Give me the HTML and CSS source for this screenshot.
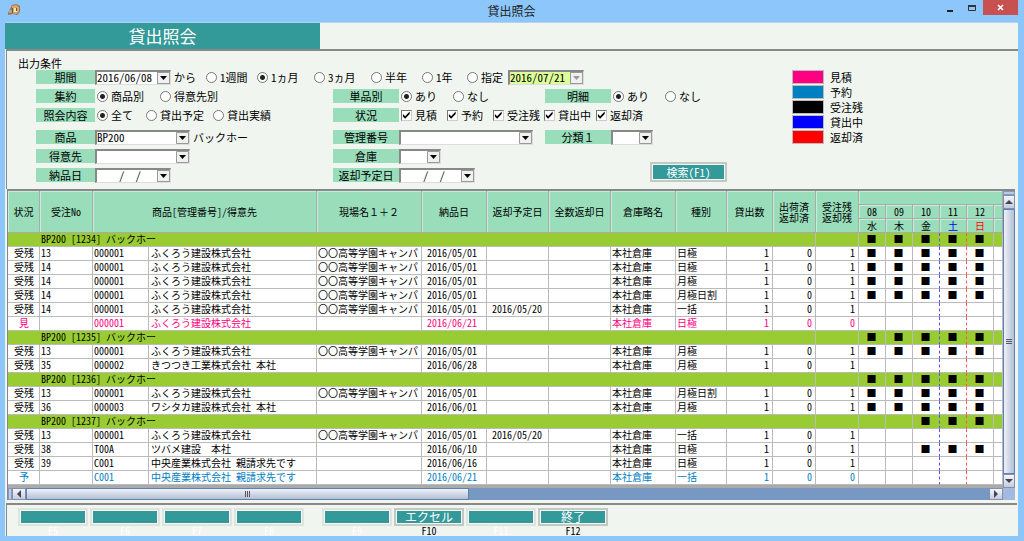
FILE: index.html
```html
<!DOCTYPE html>
<html lang="ja">
<head>
<meta charset="utf-8">
<title>貸出照会</title>
<link rel="stylesheet" href="styles.css">
</head>
<body>
<div class="window">
  <header class="titlebar">
    <svg class="app-icon" viewBox="0 0 12 12" aria-hidden="true">
      <path d="M0 9 2 5l2-4 4-1 4 2v6l-3 3-4-1-5 1z" fill="#9a7658"/>
      <path d="M4 2 8 1l3 2v5l-3 2-4-1z" fill="#dba468"/>
      <path d="M6 4h3v4H6z" fill="#efe3b0"/>
      <path d="M1 6h3v3H1z" fill="#b9a878"/>
      <path d="M4 4h1v5H4zM8 4h1v3H8z" fill="#5d5a58"/>
    </svg>
    <h1 class="window-title">貸出照会</h1>
    <div class="window-buttons">
      <button class="win-btn" aria-label="最小化"><svg viewBox="0 0 10 10"><path d="M2 7h6v2H2z" fill="#222"/></svg></button>
      <button class="win-btn" aria-label="最大化"><svg viewBox="0 0 10 10"><path d="M1.500 2.500h7v5h-7z" fill="none" stroke="#333"/><path d="M1 2h8v2H1z" fill="#333"/></svg></button>
      <button class="win-btn close" aria-label="閉じる"><svg viewBox="0 0 10 10"><path d="m2 2 5 5M7 2 2 7" stroke="#fff" stroke-width="1.6"/></svg></button>
    </div>
  </header>
  <main class="content">
    <div class="banner"><h2 class="banner-title">貸出照会</h2></div>

    <form class="criteria">
      <div class="criteria-title">出力条件</div>
      <div class="criteria-body">
        <div class="fields">
          <div class="field wide">
            <label class="tag" for="from">期間</label>
            <span class="date"><input id="from" type="text" value="2016/06/08"><button type="button" class="drop" aria-label="日付を選択"></button></span>
            <span class="after">から</span>
            <div class="opts opts-period">
              <label><input type="radio" name="period">1週間</label>
              <label><input type="radio" name="period" checked>1ヵ月</label>
              <label><input type="radio" name="period">3ヵ月</label>
              <label><input type="radio" name="period">半年</label>
              <label><input type="radio" name="period">1年</label>
              <label><input type="radio" name="period">指定</label>
            </div>
            <span class="date until"><input type="text" value="2016/07/21" aria-label="指定日"><button type="button" class="drop" aria-label="日付を選択" disabled></button></span>
          </div>

          <div class="field" role="radiogroup" aria-labelledby="t-sum">
            <span class="tag" id="t-sum">集約</span>
            <div class="opts opts-sum">
              <label><input type="radio" name="sum" checked>商品別</label>
              <label><input type="radio" name="sum">得意先別</label>
            </div>
          </div>
          <div class="field" role="radiogroup" aria-labelledby="t-unit">
            <span class="tag" id="t-unit">単品別</span>
            <div class="opts opts-yn">
              <label><input type="radio" name="unit" checked>あり</label>
              <label><input type="radio" name="unit">なし</label>
            </div>
          </div>
          <div class="field" role="radiogroup" aria-labelledby="t-detail">
            <span class="tag" id="t-detail">明細</span>
            <div class="opts opts-yn">
              <label><input type="radio" name="detail" checked>あり</label>
              <label><input type="radio" name="detail">なし</label>
            </div>
          </div>

          <div class="field" role="radiogroup" aria-labelledby="t-kind">
            <span class="tag" id="t-kind">照会内容</span>
            <div class="opts opts-kind">
              <label><input type="radio" name="kind" checked>全て</label>
              <label><input type="radio" name="kind">貸出予定</label>
              <label><input type="radio" name="kind">貸出実績</label>
            </div>
          </div>
          <div class="field span2" role="group" aria-labelledby="t-state">
            <span class="tag" id="t-state">状況</span>
            <div class="opts opts-state">
              <label><input type="checkbox" checked>見積</label>
              <label><input type="checkbox" checked>予約</label>
              <label><input type="checkbox" checked>受注残</label>
              <label><input type="checkbox" checked>貸出中</label>
              <label><input type="checkbox" checked>返却済</label>
            </div>
          </div>

          <div class="field">
            <label class="tag" for="item">商品</label>
            <select id="item" class="combo"><option>BP200</option></select>
            <span class="after">バックホー</span>
          </div>
          <div class="field">
            <label class="tag" for="serial">管理番号</label>
            <select id="serial" class="combo combo-long"><option></option></select>
          </div>
          <div class="field">
            <label class="tag" for="class1">分類１</label>
            <select id="class1" class="combo combo-short"><option></option></select>
          </div>

          <div class="field">
            <label class="tag" for="client">得意先</label>
            <select id="client" class="combo"><option></option></select>
          </div>
          <div class="field">
            <label class="tag" for="store">倉庫</label>
            <select id="store" class="combo combo-short"><option></option></select>
          </div>
          <button type="button" class="btn search">検索(F1)</button>

          <div class="field">
            <label class="tag" for="deliv">納品日</label>
            <span class="date"><input id="deliv" type="text" value="    /  /"><button type="button" class="drop" aria-label="日付を選択"></button></span>
          </div>
          <div class="field">
            <label class="tag" for="due">返却予定日</label>
            <span class="date"><input id="due" type="text" value="    /  /"><button type="button" class="drop" aria-label="日付を選択"></button></span>
          </div>
        </div>
        <ul class="legend">
          <li><span class="swatch estimate"></span>見積</li>
          <li><span class="swatch reserve"></span>予約</li>
          <li><span class="swatch ordered"></span>受注残</li>
          <li><span class="swatch lent"></span>貸出中</li>
          <li><span class="swatch returned"></span>返却済</li>
        </ul>
      </div>
    </form>

    <section class="results">
      <div class="grid-view">
        <table class="list">
          <colgroup>
            <col class="c-state"><col class="c-order"><col class="c-code"><col class="c-name"><col class="c-site"><col class="c-date"><col class="c-due"><col class="c-due"><col class="c-store"><col class="c-kind"><col class="c-qty"><col class="c-num"><col class="c-num"><col class="c-day"><col class="c-day"><col class="c-day"><col class="c-day"><col class="c-day"><col class="c-rest">
          </colgroup>
          <thead>
            <tr><th rowspan="3">状況</th><th rowspan="3">受注No</th><th rowspan="3" colspan="2">商品[管理番号]/得意先</th><th rowspan="3">現場名１＋２</th><th rowspan="3">納品日</th><th rowspan="3">返却予定日</th><th rowspan="3">全数返却日</th><th rowspan="3">倉庫略名</th><th rowspan="3">種別</th><th rowspan="3">貸出数</th><th rowspan="3" class="two">出荷済<br>返却済</th><th rowspan="3" class="two">受注残<br>返却残</th><th colspan="6"></th></tr>
            <tr><th>08</th><th>09</th><th>10</th><th>11</th><th>12</th><th></th></tr>
            <tr><th>水</th><th>木</th><th>金</th><th class="sat">土</th><th class="sun">日</th><th></th></tr>
          </thead>
          <tbody>
            <tr class="group"><td><td colspan="11">BP200 [1234] バックホー<td><td>■<td>■<td>■<td>■<td>■<td></tr>
            <tr><td>受残<td>13<td>000001<td>ふくろう建設株式会社<td>〇〇高等学園キャンパ<td>2016/05/01<td><td><td>本社倉庫<td>日極<td>1<td>0<td>1<td>■<td>■<td>■<td>■<td>■<td></tr>
            <tr><td>受残<td>14<td>000001<td>ふくろう建設株式会社<td>〇〇高等学園キャンパ<td>2016/05/01<td><td><td>本社倉庫<td>日極<td>1<td>0<td>1<td>■<td>■<td>■<td>■<td>■<td></tr>
            <tr><td>受残<td>14<td>000001<td>ふくろう建設株式会社<td>〇〇高等学園キャンパ<td>2016/05/01<td><td><td>本社倉庫<td>月極<td>1<td>0<td>1<td>■<td>■<td>■<td>■<td>■<td></tr>
            <tr><td>受残<td>14<td>000001<td>ふくろう建設株式会社<td>〇〇高等学園キャンパ<td>2016/05/01<td><td><td>本社倉庫<td>月極日割<td>1<td>0<td>1<td>■<td>■<td>■<td>■<td>■<td></tr>
            <tr><td>受残<td>14<td>000001<td>ふくろう建設株式会社<td>〇〇高等学園キャンパ<td>2016/05/01<td>2016/05/20<td><td>本社倉庫<td>一括<td>1<td>0<td>1<td><td><td><td><td><td></tr>
            <tr class="is-estimate"><td>見<td><td>000001<td>ふくろう建設株式会社<td><td>2016/06/21<td><td><td>本社倉庫<td>日極<td>1<td>0<td>0<td><td><td><td><td><td></tr>
            <tr class="group"><td><td colspan="11">BP200 [1235] バックホー<td><td>■<td>■<td>■<td>■<td>■<td></tr>
            <tr><td>受残<td>13<td>000001<td>ふくろう建設株式会社<td>〇〇高等学園キャンパ<td>2016/05/01<td><td><td>本社倉庫<td>月極<td>1<td>0<td>1<td>■<td>■<td>■<td>■<td>■<td></tr>
            <tr><td>受残<td>35<td>000002<td>きつつき工業株式会社 本社<td><td>2016/06/28<td><td><td>本社倉庫<td>月極<td>1<td>0<td>1<td><td><td><td><td><td></tr>
            <tr class="group"><td><td colspan="11">BP200 [1236] バックホー<td><td>■<td>■<td>■<td>■<td>■<td></tr>
            <tr><td>受残<td>13<td>000001<td>ふくろう建設株式会社<td>〇〇高等学園キャンパ<td>2016/05/01<td><td><td>本社倉庫<td>月極日割<td>1<td>0<td>1<td>■<td>■<td>■<td>■<td>■<td></tr>
            <tr><td>受残<td>36<td>000003<td>ワシタカ建設株式会社 本社<td><td>2016/06/01<td><td><td>本社倉庫<td>月極<td>1<td>0<td>1<td>■<td>■<td>■<td>■<td>■<td></tr>
            <tr class="group"><td><td colspan="11">BP200 [1237] バックホー<td><td><td><td>■<td>■<td>■<td></tr>
            <tr><td>受残<td>13<td>000001<td>ふくろう建設株式会社<td>〇〇高等学園キャンパ<td>2016/05/01<td>2016/05/20<td><td>本社倉庫<td>一括<td>1<td>0<td>1<td><td><td><td><td><td></tr>
            <tr><td>受残<td>38<td>T00A<td>ツバメ建設　本社<td><td>2016/06/10<td><td><td>本社倉庫<td>日極<td>1<td>0<td>1<td><td><td>■<td>■<td>■<td></tr>
            <tr><td>受残<td>39<td>C001<td>中央産業株式会社 親請求先です<td><td>2016/06/16<td><td><td>本社倉庫<td>日極<td>1<td>0<td>1<td><td><td><td><td><td></tr>
            <tr class="is-reserve"><td>予<td><td>C001<td>中央産業株式会社 親請求先です<td><td>2016/06/21<td><td><td>本社倉庫<td>一括<td>1<td>0<td>0<td><td><td><td><td><td></tr>
          </tbody>
        </table>
        <div class="vscroll">
          <span class="nib"></span>
          <button class="arrow" aria-label="上へ"><svg viewBox="0 0 8 8"><path d="M0 6h8L4 2z"/></svg></button>
          <span class="thumb"><i></i><i></i><i></i></span>
          <button class="arrow" aria-label="下へ"><svg viewBox="0 0 8 8"><path d="M0 2h8L4 6z"/></svg></button>
        </div>
      </div>
      <div class="hscroll">
        <span class="nib"></span>
        <button class="arrow" aria-label="左へ"><svg viewBox="0 0 8 8"><path d="M6 0v8L2 4z"/></svg></button>
        <span class="thumb"><i></i><i></i><i></i></span>
        <span class="track"></span>
        <button class="arrow" aria-label="右へ"><svg viewBox="0 0 8 8"><path d="M2 0v8l4-4z"/></svg></button>
        <span class="corner"></span>
      </div>
    </section>

    <footer class="keys">
      <div class="key off"><button class="btn" disabled aria-label="F5"></button><span>F5</span></div>
      <div class="key off"><button class="btn" disabled aria-label="F6"></button><span>F6</span></div>
      <div class="key off"><button class="btn" disabled aria-label="F7"></button><span>F7</span></div>
      <div class="key off"><button class="btn" disabled aria-label="F8"></button><span>F8</span></div>
      <div class="key off second"><button class="btn" disabled aria-label="F9"></button><span>F9</span></div>
      <div class="key"><button class="btn">エクセル</button><span>F10</span></div>
      <div class="key off"><button class="btn" disabled aria-label="F11"></button><span>F11</span></div>
      <div class="key"><button class="btn">終了</button><span>F12</span></div>
    </footer>
  </main>
</div>
</body>
</html>
```
FILE: styles.css
```css
* { box-sizing: border-box; }

body {
  margin: 0;
  background: #8cc6fb;
  color: #000;
  font: 11px/14px "Noto Sans Mono CJK JP", "Noto Sans CJK JP", monospace;
}

button, input, select { font: inherit; color: inherit; margin: 0; padding: 0; border-radius: 0; }
h1, h2 { margin: 0; font-weight: normal; }

.window {
  display: flex;
  flex-direction: column;
  min-height: 100vh;
  padding: 0 6px 5px 5px;
}

/* title bar */
.titlebar { display: grid; grid-template-columns: 1fr auto 1fr; height: 22px; }
.app-icon { width: 12px; height: 12px; margin: 4px 0 0 3px; }
.window-title { font-size: 12px; line-height: 22px; color: #222; }
.window-buttons { display: flex; justify-content: flex-end; }
.win-btn { width: 22px; height: 15px; border: 0; background: none; display: flex; align-items: center; justify-content: center; }
.win-btn svg { width: 10px; height: 10px; }
.win-btn.close { width: 35px; background: #c75050; }

.content { flex: 1; display: flex; flex-direction: column; background: #f0f5f0; border-top: 1px solid #b4d4ec; }

.banner-title {
  width: 315px;
  background: #339999;
  color: #fff;
  font-size: 17px;
  font-weight: 300;
  line-height: 26px;
  text-align: center;
}

/* search criteria */
.criteria { border: solid #888; border-width: 2px 0 0 1px; padding: 5px 0 7px 11px; margin-left: 1px; }
.criteria-title { line-height: 14px; }
.criteria-body { display: flex; gap: 65px; padding-left: 18px; }
.fields {
  display: grid;
  grid-template-columns: 297px 212px 182px;
  grid-template-rows: 14px 14px 17px 14px 14px 14px;
  row-gap: 5px;
}
.field { display: flex; align-items: flex-start; height: 14px; white-space: nowrap; }
.wide { grid-column: 1 / -1; }
.span2 { grid-column: span 2; }
.tag { width: 66px; height: 14px; background: #99ddbb; text-align: center; }
.field:nth-child(1) .tag, .field:nth-child(2) .tag, .field:nth-child(5) .tag,
.field:nth-child(7) .tag, .field:nth-child(10) .tag, .field:nth-child(13) .tag { width: 59px; }
.after { margin-left: 3px; }

.opts { display: grid; padding-left: 2px; }
.opts label { display: flex; align-items: center; gap: 3px; height: 14px; }
.opts-period { grid-template-columns: 51px 57px 57px 51px 45px 41px; padding-left: 10px; }
.opts-sum { grid-template-columns: 63px 70px; }
.opts-yn { grid-template-columns: 52px 50px; }
.opts-kind { grid-template-columns: 49px 67px 67px; }
.opts-state { grid-template-columns: 46px 46px 51px 52px 50px; }

input[type="radio"], input[type="checkbox"] {
  appearance: none;
  flex: none;
  width: 11px;
  height: 11px;
  background: #fff;
  border: 1px solid #777;
}
input[type="radio"] { border-radius: 50%; }
input[type="radio"]:checked { background: radial-gradient(circle, #222 0 2px, #fff 3px); }
input[type="checkbox"] { border-color: #777 #ccc #ccc #777; }
input[type="checkbox"]::before {
  content: "";
  display: block;
  height: 9px;
  background: #000;
  clip-path: polygon(10% 40%, 35% 65%, 85% 12%, 85% 38%, 35% 92%, 10% 66%);
}

.date, .combo {
  height: 15px;
  background: #fff;
  border: solid;
  border-width: 2px 1px 1px 2px;
  border-color: #888 #ddd #ddd #888;
}
.date { display: flex; width: 76px; }
.date input { flex: 1; min-width: 0; height: 12px; border: 0; padding-bottom: 3px; background: none; line-height: 9px; }
.drop {
  width: 13px;
  border: 1px solid #999;
  background: #f0f0f0 url("data:image/svg+xml,%3Csvg xmlns='http://www.w3.org/2000/svg' width='7' height='4'%3E%3Cpath d='M0 0h7L3.500 4z'/%3E%3C/svg%3E") center / 7px 4px no-repeat;
}
.until { background: #ddff99; }
.drop:disabled { background-image: url("data:image/svg+xml,%3Csvg xmlns='http://www.w3.org/2000/svg' width='7' height='4'%3E%3Cpath d='M0 0h7L3.500 4z' fill='%23999'/%3E%3C/svg%3E"); }
.combo {
  appearance: none;
  width: 95px;
  line-height: 9px;
  padding-bottom: 1px;
  background: url("data:image/svg+xml,%3Csvg xmlns='http://www.w3.org/2000/svg' width='13' height='12'%3E%3Cpath d='M.5.5h12v11H.5z' fill='%23f0f0f0' stroke='%23999'/%3E%3Cpath d='M3 4h7L6.500 8z'/%3E%3C/svg%3E") right top / 13px 12px no-repeat #fff;
}
.combo-long { width: 134px; }
.combo-short { width: 42px; }

.btn {
  background: #339999;
  color: #fff;
  border: 2px solid #c4c8c4;
  outline: 1px solid #f6f8f6;
  outline-offset: -3px;
  text-align: center;
}
.search { grid-row: 5 / 7; grid-column: 3; justify-self: end; align-self: end; width: 77px; height: 20px; line-height: 14px; }

.legend { list-style: none; margin: 0; padding: 0; }
.legend li { display: flex; gap: 6px; height: 15px; }
.swatch { width: 32px; height: 14px; border: 1px solid #bbb; }
.estimate { background: #ff0080; }
.reserve { background: #0080c0; }
.ordered { background: #000; }
.lent { background: #00f; }
.returned { background: #f00; }

/* result list */
.results { margin-left: 2px; margin-right: 3px; border: solid #888; border-width: 2px 0 0 1px; background: #aaa; }
.grid-view { display: flex; font-size: 10px; line-height: 13px; }
.list { flex: 1; min-width: 0; table-layout: fixed; border-spacing: 0; width: 100%; }
.list th, .list td {
  height: 14px;
  padding: 0 0 0 1px;
  border: solid #bbb;
  border-width: 0 1px 1px 0;
  white-space: nowrap;
}
.list th { padding: 0; background: #99ddbb; font-weight: normal; border-color: #aaa; box-shadow: inset 1px 1px #c4eeda; }
.list .two { line-height: 11px; }
.list .sat { color: #00f; }
.list .sun { color: #f00; }
.list td { background: #fff; line-height: 11px; padding-bottom: 2px; }
.c-state { width: 32px; }
.c-order { width: 53px; }
.c-code { width: 56px; }
.c-site { width: 105px; }
.c-date { width: 65px; }
.c-due { width: 62px; }
.c-store { width: 65px; }
.c-kind { width: 51px; }
.c-qty { width: 46px; }
.c-num { width: 43px; }
.c-day { width: 27px; }
.c-rest { width: 9px; }
.list td:first-child { text-align: center; }
.list tr:not(.group) td:nth-child(4) { padding-left: 2px; }
.list td:nth-child(6), .list td:nth-child(7) { padding-left: 5px; }
.list tr:not(.group) td:nth-child(n+11):nth-child(-n+13) { text-align: right; padding-right: 3px; }
.list tr td:nth-last-child(-n+6) { padding: 0 1px 2px 0; text-align: center; }
.list td:nth-last-child(4) { border-right: 1px dashed #55f; }
.list td:nth-last-child(3) { border-right: 1px dashed #f55; }
.list .group td { background: #99cc33; }
.list .group td:first-child { border-right-color: #99cc33; }
.is-estimate { color: #ff0080; }
.is-reserve { color: #0080c0; }

/* scroll bars */
.vscroll { display: flex; flex-direction: column; width: 12px; margin-bottom: -3px; }
.hscroll { display: flex; height: 12px; margin-top: 3px; }
.nib { flex: none; width: 4px; background: #b8cce8; border: 1px solid #8898b8; }
.vscroll .nib { width: auto; height: 4px; }
.arrow { flex: none; width: 14px; height: 12px; border: 1px solid #8090b0; background: linear-gradient(#f4f6fa, #c4ccdc); display: flex; align-items: center; justify-content: center; }
.vscroll .arrow { width: 12px; height: 14px; }
.arrow svg { width: 8px; height: 8px; flex: none; fill: #445; }
.thumb { display: flex; align-items: center; justify-content: center; gap: 1px; border: 1px solid #6080b0; background: linear-gradient(#eef1f8, #b4bfd4); }
.vscroll .thumb { flex: 1; flex-direction: column; background: linear-gradient(90deg, #eef1f8, #b4bfd4); }
.hscroll .thumb { flex: 442; }
.thumb i { width: 1px; height: 6px; background: #556; }
.vscroll .thumb i { width: 6px; height: 1px; }
.track { flex: 522; background: #7898c4; }
.corner { width: 12px; background: #a4b8e0; }

/* function keys */
.keys { display: flex; flex: 1; gap: 2px; margin: 3px 1px 0; padding: 3px 0 0 11px; border: solid #888; border-width: 2px 0 0 1px; }
.key { display: flex; flex-direction: column; width: 70px; text-align: center; font-size: 10px; line-height: 10px; }
.key .btn { height: 18px; font-size: 12px; line-height: 12px; }
.key.off .btn { border-color: #e0e4e0; }
.key.off span { color: #fff; }
.second { margin-left: 16px; }
```
